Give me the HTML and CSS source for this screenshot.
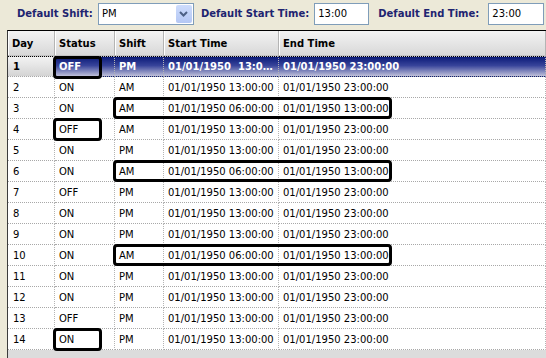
FILE: index.html
```html
<!DOCTYPE html>
<html lang="en">
<head>
  <meta charset="UTF-8">
  <title>Shift Schedule</title>
  <link rel="stylesheet" href="styles.css">
</head>
<body>
  <!-- 기본값 설정 바 -->
  <div class="toolbar">
    <label class="tb-label first">Default Shift:</label>
    <div class="combo">
      <span class="combo-text">PM</span>
      <span class="combo-btn">
        <svg width="9" height="6" viewBox="0 0 9 6"><path d="M1 1 L4.5 4.5 L8 1" fill="none" stroke="#4d6185" stroke-width="2"/></svg>
      </span>
    </div>
    <label class="tb-label">Default Start Time:</label>
    <div class="field start">13:00</div>
    <label class="tb-label">Default End Time:</label>
    <div class="field end">23:00</div>
  </div>

  <!-- 일정 그리드 -->
  <div class="grid">
    <table class="schedule">
      <colgroup>
        <col class="c-day"><col class="c-status"><col class="c-shift"><col class="c-start"><col class="c-end">
      </colgroup>
      <thead>
        <tr><th>Day</th><th>Status</th><th>Shift</th><th>Start Time</th><th>End Time</th></tr>
      </thead>
      <tbody>
        <tr class="selected">
          <td class="day">1</td>
          <td class="ringed"><span class="ring ring-status"></span>OFF</td>
          <td>PM</td>
          <td class="clip">01/01/1950&nbsp; 13:00:00</td>
          <td>01/01/1950 23:00:00</td>
        </tr>
        <tr><td>2</td><td>ON</td><td>AM</td><td>01/01/1950 13:00:00</td><td>01/01/1950 23:00:00</td></tr>
        <tr><td>3</td><td>ON</td><td class="ringed"><span class="ring ring-wide"></span>AM</td><td>01/01/1950 06:00:00</td><td>01/01/1950 13:00:00</td></tr>
        <tr><td>4</td><td class="ringed"><span class="ring ring-status"></span>OFF</td><td>AM</td><td>01/01/1950 13:00:00</td><td>01/01/1950 23:00:00</td></tr>
        <tr><td>5</td><td>ON</td><td>PM</td><td>01/01/1950 13:00:00</td><td>01/01/1950 23:00:00</td></tr>
        <tr><td>6</td><td>ON</td><td class="ringed"><span class="ring ring-wide"></span>AM</td><td>01/01/1950 06:00:00</td><td>01/01/1950 13:00:00</td></tr>
        <tr><td>7</td><td>OFF</td><td>PM</td><td>01/01/1950 13:00:00</td><td>01/01/1950 23:00:00</td></tr>
        <tr><td>8</td><td>ON</td><td>PM</td><td>01/01/1950 13:00:00</td><td>01/01/1950 23:00:00</td></tr>
        <tr><td>9</td><td>ON</td><td>PM</td><td>01/01/1950 13:00:00</td><td>01/01/1950 23:00:00</td></tr>
        <tr><td>10</td><td>ON</td><td class="ringed"><span class="ring ring-wide"></span>AM</td><td>01/01/1950 06:00:00</td><td>01/01/1950 13:00:00</td></tr>
        <tr><td>11</td><td>ON</td><td>PM</td><td>01/01/1950 13:00:00</td><td>01/01/1950 23:00:00</td></tr>
        <tr><td>12</td><td>ON</td><td>PM</td><td>01/01/1950 13:00:00</td><td>01/01/1950 23:00:00</td></tr>
        <tr><td>13</td><td>OFF</td><td>PM</td><td>01/01/1950 13:00:00</td><td>01/01/1950 23:00:00</td></tr>
        <tr><td>14</td><td class="ringed"><span class="ring ring-status"></span>ON</td><td>PM</td><td>01/01/1950 13:00:00</td><td>01/01/1950 23:00:00</td></tr>
      </tbody>
    </table>
  </div>
</body>
</html>
```

FILE: styles.css
```css
/* 기본 리셋 */
html, body {
  margin: 0;
  padding: 0;
  width: 100%;
  height: 100%;
  background-color: #ece9d8;
  color: #000000;
  font-family: 'DejaVu Sans', sans-serif;
  font-size: 10px;
  overflow: hidden;
}
*, *::before, *::after {
  box-sizing: border-box;
}
/* 상단 설정 바 */
.toolbar {
  display: flex;
  align-items: center;
  height: 30px;
  padding-bottom: 6px;
  padding-top: 3px;
}
.tb-label {
  font-weight: 700;
  color: #1e2470;
  white-space: nowrap;
  margin-left: 7px;
  margin-right: 5px;
}
.tb-label.first {
  margin-left: 17px;
}
.combo {
  display: flex;
  align-items: center;
  width: 96px;
  height: 22px;
  background: #fff;
  border: 1px solid #7f9db9;
  padding: 1px 1px 1px 3px;
}
.combo-text {
  flex: 1;
}
.combo-btn {
  width: 16px;
  height: 18px;
  display: flex;
  align-items: center;
  justify-content: center;
  background: linear-gradient(#cddcfc, #b4c7f4);
  border-radius: 2px;
}
.field {
  height: 22px;
  background: #fff;
  border: 1px solid #7f9db9;
  padding: 4px 3px;
  line-height: 12px;
}
.field.start {
  width: 55px;
  margin-right: 2px;
}
.field.end {
  width: 56px;
  margin-left: 4px;
}
/* 그리드 */
.grid {
  margin-left: 7px;
  height: 328px;
  border-left: 1px solid #3c3c3c;
  border-top: 1px solid #000;
  background: #dcdcdc;
}
.schedule {
  table-layout: fixed;
  border-collapse: separate;
  border-spacing: 0;
  width: 538px;
}
.c-day { width: 47px; }
.c-status { width: 60px; }
.c-shift { width: 49px; }
.c-start { width: 115px; }
.schedule th {
  height: 25px;
  padding: 0 4px;
  text-align: left;
  font-weight: 700;
  background: linear-gradient(#f3f3f3, #d8d8d8);
  border-right: 1px solid #b4b4b4;
  border-bottom: 1px solid #c4c4c4;
  box-shadow: inset 1px 0 #ffffff;
  white-space: nowrap;
}
.schedule td {
  height: 21px;
  padding: 0 3px 0 4px;
  background: #fff;
  border-right: 1px dotted #b4b4b4;
  border-bottom: 1px dotted #a8a8a8;
  white-space: nowrap;
}
.schedule td:first-child {
  padding-left: 5px;
}
/* 선택된 행 */
.selected td {
  background: linear-gradient(#0a1a78, #38449a 45%, #bfc0da);
  color: #fff;
  font-weight: 700;
  border-top: 1px dotted #000;
}
.selected td.day {
  background: linear-gradient(#f3f3f3, #d4d4d4);
  color: #000;
}
.clip {
  overflow: hidden;
  text-overflow: ellipsis;
}
/* 강조 표시 테두리 */
.ringed {
  position: relative;
}
.ring {
  position: absolute;
  border: 3px solid #000;
  border-radius: 4px;
}
.ring-status {
  left: -2px;
  top: -1px;
  width: 49px;
  height: 23px;
}
.ring-wide {
  left: -2px;
  top: -1px;
  width: 279px;
  height: 22px;
}
```
